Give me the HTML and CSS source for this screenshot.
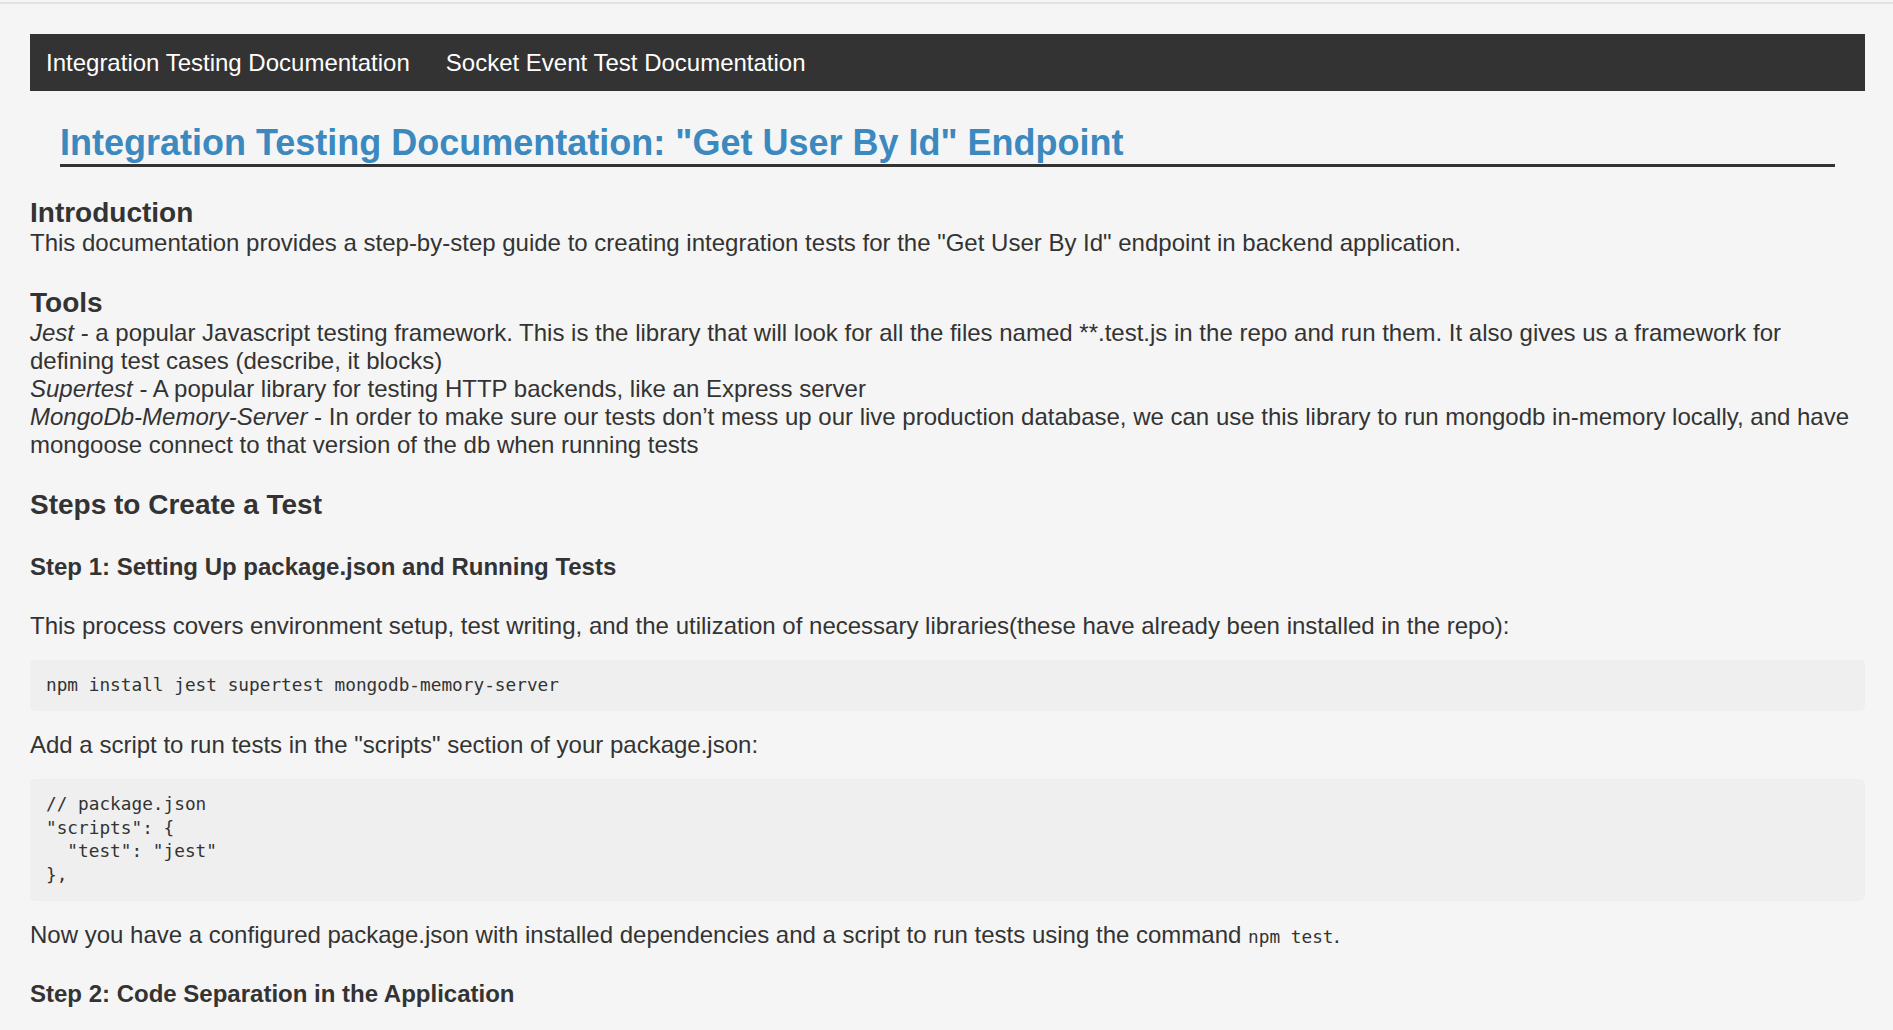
FILE: index.html
```html
<!DOCTYPE html>
<html lang="en">
<head>
<meta charset="utf-8">
<title>Integration Testing Documentation</title>
<link rel="stylesheet" href="styles.css">
</head>
<body>
<div class="topline"></div>
<div class="page">
  <nav class="nav">
    <a class="nav-link" href="#">Integration Testing Documentation</a>
    <a class="nav-link" href="#">Socket Event Test Documentation</a>
  </nav>
  <h1 class="title">Integration Testing Documentation: "Get User By Id" Endpoint</h1>

  <h2 class="section-title">Introduction</h2>
  <p class="lead">This documentation provides a step-by-step guide to creating integration tests for the "Get User By Id" endpoint in backend application.</p>

  <h2 class="section-title">Tools</h2>
  <div class="tools">
    <div class="tool"><em>Jest</em> - a popular Javascript testing framework. This is the library that will look for all the files named **.test.js in the repo and run them. It also gives us a framework for defining test cases (describe, it blocks)</div>
    <div class="tool"><em>Supertest</em> - A popular library for testing HTTP backends, like an Express server</div>
    <div class="tool"><em>MongoDb-Memory-Server</em> - In order to make sure our tests don’t mess up our live production database, we can use this library to run mongodb in-memory locally, and have mongoose connect to that version of the db when running tests</div>
  </div>

  <h3 class="steps-title">Steps to Create a Test</h3>

  <h4 class="step-title step-one">Step 1: Setting Up package.json and Running Tests</h4>
  <p class="text">This process covers environment setup, test writing, and the utilization of necessary libraries(these have already been installed in the repo):</p>
  <pre class="code">npm install jest supertest mongodb-memory-server</pre>
  <p class="text">Add a script to run tests in the "scripts" section of your package.json:</p>
  <pre class="code">// package.json
"scripts": {
  "test": "jest"
},</pre>
  <p class="text">Now you have a configured package.json with installed dependencies and a script to run tests using the command <code class="inline-code">npm test</code>.</p>

  <h4 class="step-title step-two">Step 2: Code Separation in the Application</h4>
</div>
</body>
</html>
```
FILE: styles.css
```css
html, body {
  margin: 0;
  padding: 0;
}
body {
  background: #f5f5f5;
  color: #333333;
  font-family: "Liberation Sans", Arial, sans-serif;
  font-size: 24px;
  line-height: 28px;
}
.topline {
  margin-top: 2px;
  height: 2px;
  background: #e2e2e2;
}
.page {
  padding: 30px 28px 0 30px;
}
.nav {
  display: flex;
  align-items: center;
  gap: 36px;
  height: 57px;
  padding: 0 16px;
  background: #333333;
}
.nav-link {
  color: #ffffff;
  text-decoration: none;
  font-size: 24px;
  line-height: 57px;
}
.title {
  margin: 31px 30px 0 30px;
  padding: 0;
  border-bottom: 3px solid #333333;
  color: #3b89bf;
  font-size: 36px;
  line-height: 42px;
  font-weight: bold;
}
.section-title {
  margin: 30px 0 0 0;
  font-size: 28px;
  line-height: 32px;
  font-weight: bold;
}
.lead {
  margin: 0;
}
.tools {
  margin: 0;
}
.tool em {
  font-style: italic;
}
.steps-title {
  margin: 30px 0 0 0;
  font-size: 28px;
  line-height: 32px;
  font-weight: bold;
}
.step-title {
  margin: 31px 0 31px 0;
  font-size: 24px;
  line-height: 28px;
  font-weight: bold;
}
.step-one {
  margin-top: 32px;
}
.text {
  margin: 20px 0;
}
.code {
  margin: 0;
  padding: 14px 16px;
  background: #efefef;
  border-radius: 5px;
  font-family: "DejaVu Sans Mono", "Liberation Mono", monospace;
  font-size: 17.75px;
  line-height: 23.4px;
  color: #333333;
}
.inline-code {
  font-family: "DejaVu Sans Mono", "Liberation Mono", monospace;
  font-size: 17.75px;
}
.step-two {
  margin-top: 29px;
}
```
